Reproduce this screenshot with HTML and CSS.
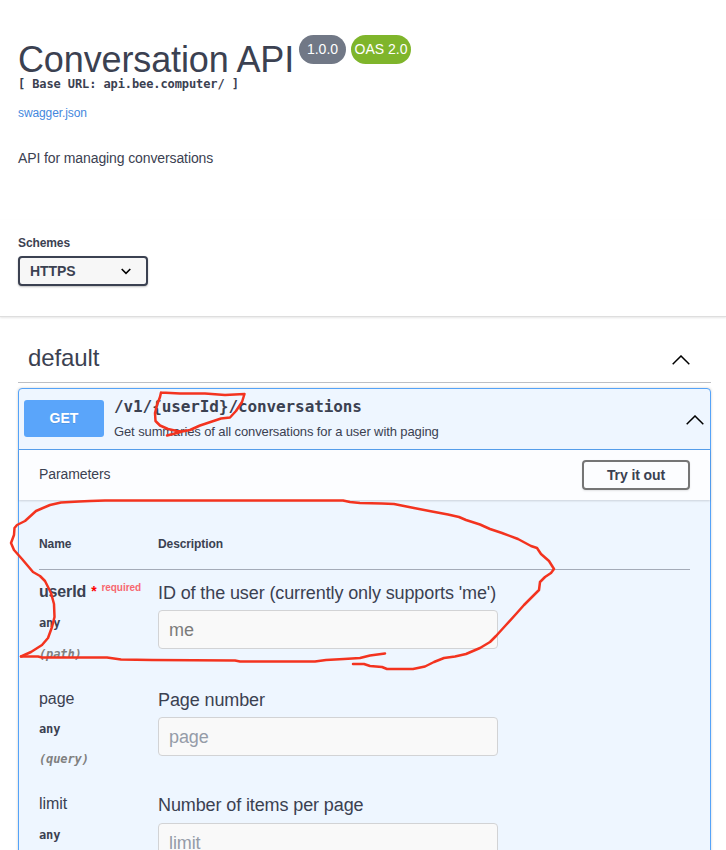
FILE: index.html
```html
<!DOCTYPE html>
<html lang="en">
<head>
<meta charset="utf-8">
<title>Conversation API</title>
<link rel="stylesheet" href="styles.css">
</head>
<body>
<header class="info">
  <div class="title-row">
    <h1 class="title">Conversation API</h1>
    <span class="badge version">1.0.0</span>
    <span class="badge oas">OAS 2.0</span>
  </div>
  <div class="base-url">[ Base URL: api.bee.computer/ ]</div>
  <a class="spec-link">swagger.json</a>
  <p class="about">API for managing conversations</p>
</header>
<section class="schemes">
  <div class="schemes-label">Schemes</div>
  <div class="select"><span>HTTPS</span>
    <svg width="10" height="7" viewBox="0 0 10 7"><path d="M.7 1 5 5.3 9.3 1" fill="none" stroke="#000" stroke-width="1.6"/></svg>
  </div>
</section>
<main class="operations">
  <div class="tag"><h2 class="tag-name">default</h2>
    <svg width="18" height="10" viewBox="0 0 18 10"><path d="M.7 9.2 9 1 17.3 9.2" fill="none" stroke="#000" stroke-width="1.5"/></svg>
  </div>
  <article class="opblock">
    <div class="summary">
      <span class="method">GET</span>
      <div class="summary-text">
        <div class="path">/v1/{userId}/conversations</div>
        <div class="summary-desc">Get summaries of all conversations for a user with paging</div>
      </div>
      <svg width="18" height="10" viewBox="0 0 18 10"><path d="M.7 9.2 9 1 17.3 9.2" fill="none" stroke="#000" stroke-width="1.5"/></svg>
    </div>
    <div class="section-head"><span class="section-title">Parameters</span><button class="try">Try it out</button></div>
    <div class="params">
      <div class="param-head"><span>Name</span><span>Description</span></div>
      <div class="param first">
        <div>
          <div class="name required">userId<span class="star">*</span><span class="req">required</span></div>
          <div class="type">any</div>
          <div class="in">(path)</div>
        </div>
        <div>
          <div class="desc">ID of the user (currently only supports 'me')</div>
          <div class="field value">me</div>
        </div>
      </div>
      <div class="param second">
        <div>
          <div class="name">page</div>
          <div class="type">any</div>
          <div class="in">(query)</div>
        </div>
        <div>
          <div class="desc">Page number</div>
          <div class="field">page</div>
        </div>
      </div>
      <div class="param">
        <div>
          <div class="name">limit</div>
          <div class="type">any</div>
        </div>
        <div>
          <div class="desc">Number of items per page</div>
          <div class="field">limit</div>
        </div>
      </div>
    </div>
  </article>
</main>
<svg class="ink" width="726" height="850" viewBox="0 0 726 850">
  <path d="M161 392.500 160 397 157 405 155 413 155.500 421 160 425.500 168 429 177 431 182 431.500 190 430 200 425.500 212 421.500 221 418.500 230 417.500 236 411 242 402 244.500 394 225 395 205 393.500 180 393.500 161 392.500M167 435.500 177 433 184 431"/>
  <path d="M21 656.500 31 652 42 645 48 638 52 627 54.500 617 54 604 51 593 45 581 40 576 33 572 22 559 14 550 11 543 14 535 14.500 528 17 525 25 521 36 511 50 505 61 502.500 79 501.500 90 501 105 500.500 343 500.500 350 502 360 503 382 503.500 394 504 414 508 432 511.500 448 514.500 459 517 466 520 480 524.500 490 529 502 533 518 539 531 546 537 548 541 554 549 561 554 569 551 573 545 577 540 582 539 590 533 596 524 605 516 614 506 625 496 636 490 642 480 648 466 654 455 656.500 444 658 434 662 425 666.500 413 669 387 669 382 667 370 666 364 664 353 664"/>
  <path d="M21 656.500 38 656.500 42 657.500 107 657.500 121 659.500 152 660 235 660.500 240 661.500 315 661.500 326 660 344 659 360 658 370 655.500 385 653.500"/>
</svg>
</body>
</html>
```
FILE: styles.css
```css
* { box-sizing: border-box; }
body { margin: 0; height: 850px; overflow: hidden; position: relative; background: #fff; color: #3b4151; font-family: "Liberation Sans", Arial, sans-serif; }
h1, h2, p { margin: 0; font-weight: 400; }
svg { display: block; flex: none; }
.info { height: 220px; padding: 35px 18px 0; }
.title-row { display: flex; align-items: flex-start; height: 42px; }
.title { font-size: 36px; line-height: 38px; margin-top: 6px; width: 281px; white-space: nowrap; letter-spacing: -.13px; }
.badge { height: 29px; line-height: 29px; border-radius: 15px; color: #fff; font-size: 14px; text-align: center; white-space: nowrap; }
.version { width: 47px; background: #717886; margin-right: 5px; }
.oas { width: 60px; background: #7fb52b; }
.base-url, .type, .in { font: bold 12px/14px "DejaVu Sans Mono", monospace; }
.base-url { white-space: nowrap; letter-spacing: -.1px; }
.spec-link { display: block; margin-top: 15px; font-size: 12px; line-height: 14px; color: #4487dd; letter-spacing: -.1px; }
.about { margin-top: 30px; font-size: 14px; line-height: 16px; letter-spacing: -.11px; }
.schemes { height: 97px; padding: 16px 18px 0; border-bottom: 1px solid #dedede; box-shadow: 0 1px 2px rgba(0,0,0,.1); }
.schemes-label { font-size: 12px; line-height: 14px; font-weight: 700; letter-spacing: -.1px; }
.select { display: flex; align-items: center; justify-content: space-between; width: 130px; height: 30px; margin-top: 6px; padding: 0 15px 0 10px; border: 2px solid #3b4151; border-radius: 4px; background: #f7f7f7; box-shadow: 0 1px 2px rgba(0,0,0,.25); font-size: 14px; font-weight: 700; letter-spacing: -.1px; }
.operations { padding: 27px 15px 0 18px; }
.tag { display: flex; justify-content: space-between; height: 39px; padding: 0 21px 0 10px; border-bottom: 1px solid #bdbfc4; }
.tag svg { margin-top: 11px; }
.tag-name { font-size: 24px; line-height: 28px; letter-spacing: -.1px; }
.opblock { margin-top: 5px; height: 480px; border: 1px solid #55a3f8; border-radius: 4px; background: #eef6ff; box-shadow: 0 0 3px rgba(0,0,0,.19); }
.summary { display: flex; align-items: flex-start; height: 61px; padding: 11px 6px 0 5px; border-bottom: 1px solid #559fec; }
.summary > svg { margin-top: 15px; }
.method { width: 80px; height: 37px; line-height: 37px; border-radius: 3px; background: #5aa5fa; color: #fff; font-size: 14px; font-weight: 700; text-align: center; text-shadow: 0 1px 0 rgba(0,0,0,.1); }
.summary-text { flex: 1; padding-left: 10px; margin-top: -2px; }
.path { font: bold 16px/18px "DejaVu Sans Mono", monospace; letter-spacing: -.1px; }
.summary-desc { margin-top: 8px; font-size: 13px; line-height: 16px; letter-spacing: -.11px; }
.section-head { display: flex; align-items: center; justify-content: space-between; height: 50px; padding: 0 20px; background: #fcfdff; box-shadow: 0 1px 2px rgba(0,0,0,.15); font-size: 14px; }
.section-title { line-height: 16px; margin-top: -2px; letter-spacing: -.1px; }
.try { width: 108px; height: 30px; padding: 0; border: 2px solid #757575; border-radius: 4px; background: transparent; box-shadow: 0 1px 2px rgba(0,0,0,.1); color: #3b4151; font: bold 14px "Liberation Sans", Arial, sans-serif; letter-spacing: -.1px; }
.params { padding: 0 20px; }
.param-head, .param { display: grid; grid-template-columns: 119px 1fr; }
.param-head { height: 70px; padding-top: 37px; border-bottom: 1px solid #a4abb8; font-size: 12px; font-weight: 700; line-height: 14px; letter-spacing: -.1px; }
.param { height: 106px; padding-top: 12px; white-space: nowrap; }
.param.first { height: 107px; padding-top: 13px; }
.param.second { padding-top: 13px; }
.name { height: 18px; font-size: 16px; line-height: 18px; letter-spacing: -.08px; }
.required { display: flex; font-weight: 700; letter-spacing: -.15px; }
.star { margin-left: 5px; font-size: 14px; color: red; line-height: 16px; }
.req { margin-left: 5px; font-size: 10px; line-height: 10px; color: #f76870; letter-spacing: -.05px; }
.type { margin-top: 15px; letter-spacing: -.1px; }
.second .type { margin-top: 14px; }
.in { margin-top: 16px; color: #808080; font-style: italic; letter-spacing: -.12px; }
.first .in { margin-top: 17px; }
.desc { font-size: 18px; line-height: 20px; letter-spacing: -.11px; }
.field { width: 340px; height: 39px; margin-top: 8px; padding: 0 10px; border: 1px solid #d2d3d5; border-radius: 4px; background: #f9f9f9; color: #959ca8; font-size: 18px; line-height: 38px; letter-spacing: -.1px; }
.first .field, .second .field { margin-top: 7px; }
.value { color: #7b7b7b; }
.ink { position: absolute; left: 0; top: 0; fill: none; stroke: #f3331f; stroke-width: 2.500; stroke-linecap: round; stroke-linejoin: round; }
```
